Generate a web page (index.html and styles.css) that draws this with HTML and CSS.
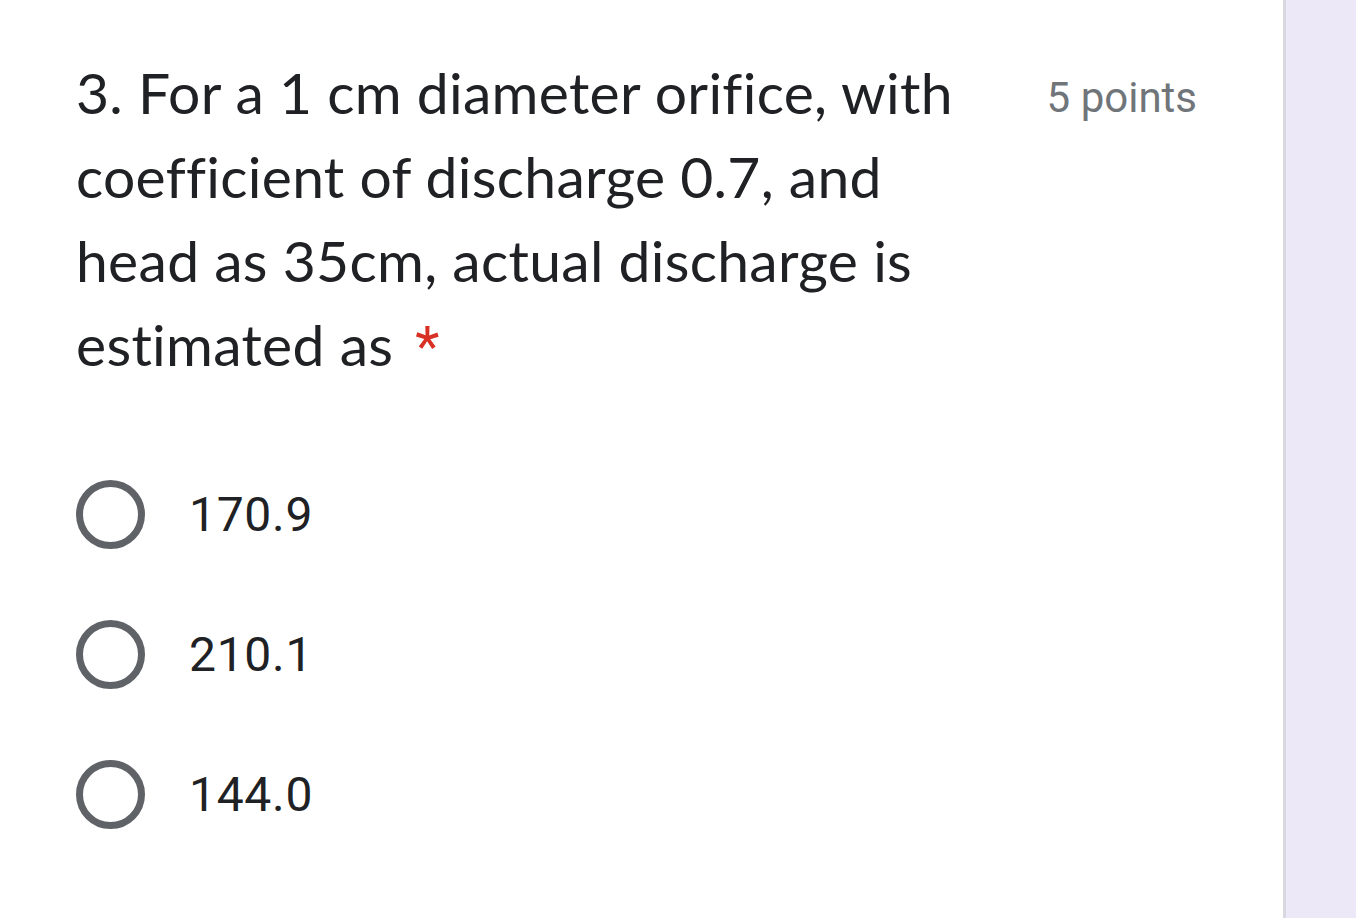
FILE: index.html
```html
<!DOCTYPE html>
<html>
<head>
<meta charset="utf-8">
<link rel="stylesheet" href="styles.css">
</head>
<body>
<div class="page">
  <main class="card">
    <div class="header">
      <div class="question">3. For a 1 cm diameter orifice, with<br>coefficient of discharge 0.7, and<br>head as 35cm, actual discharge is<br>estimated as<span class="req">*</span></div>
      <div class="points">5 points</div>
    </div>
    <div class="options">
      <label class="option"><span class="radio"></span><span class="label">170.9</span></label>
      <label class="option"><span class="radio"></span><span class="label">210.1</span></label>
      <label class="option"><span class="radio"></span><span class="label">144.0</span></label>
    </div>
  </main>
  <aside class="side"></aside>
</div>
</body>
</html>
```

FILE: styles.css
```css
html, body {
  margin: 0;
  padding: 0;
  height: 100%;
}
body {
  background: #ece8f7;
  overflow: hidden;
}
.page {
  display: flex;
  height: 918px;
}
.card {
  width: 1283px;
  flex: none;
  background: #ffffff;
  border-right: 3px solid #d9d8e0;
  box-sizing: content-box;
  padding: 50px 0 0 0;
}
.side {
  flex: 1;
  background: #ece8f7;
}
.header {
  display: flex;
  justify-content: space-between;
  align-items: flex-start;
  padding: 0 86px 0 76px;
}
.question {
  font-family: "Lato", "Open Sans", sans-serif;
  font-size: 57px;
  line-height: 84px;
  color: #202124;
  letter-spacing: 0.3px;
  font-variant-ligatures: none;
}
.req {
  font-family: "Roboto", sans-serif;
  color: #d93025;
  padding-left: 22px;
  font-size: 56px;
  line-height: 0;
  letter-spacing: 0;
}
.points {
  font-family: "Roboto", sans-serif;
  font-size: 42px;
  line-height: 84px;
  color: #70757a;
  padding-top: 6px;
}
.options {
  display: flex;
  flex-direction: column;
  padding: 58px 0 0 76px;
}
.option {
  display: flex;
  align-items: center;
  height: 140px;
}
.radio {
  width: 55px;
  height: 55px;
  border: 7px solid #5f6368;
  border-radius: 50%;
  flex: none;
}
.label {
  font-family: "Roboto", sans-serif;
  font-size: 48px;
  color: #202124;
  margin-left: 44px;
  letter-spacing: 0.7px;
}
```
